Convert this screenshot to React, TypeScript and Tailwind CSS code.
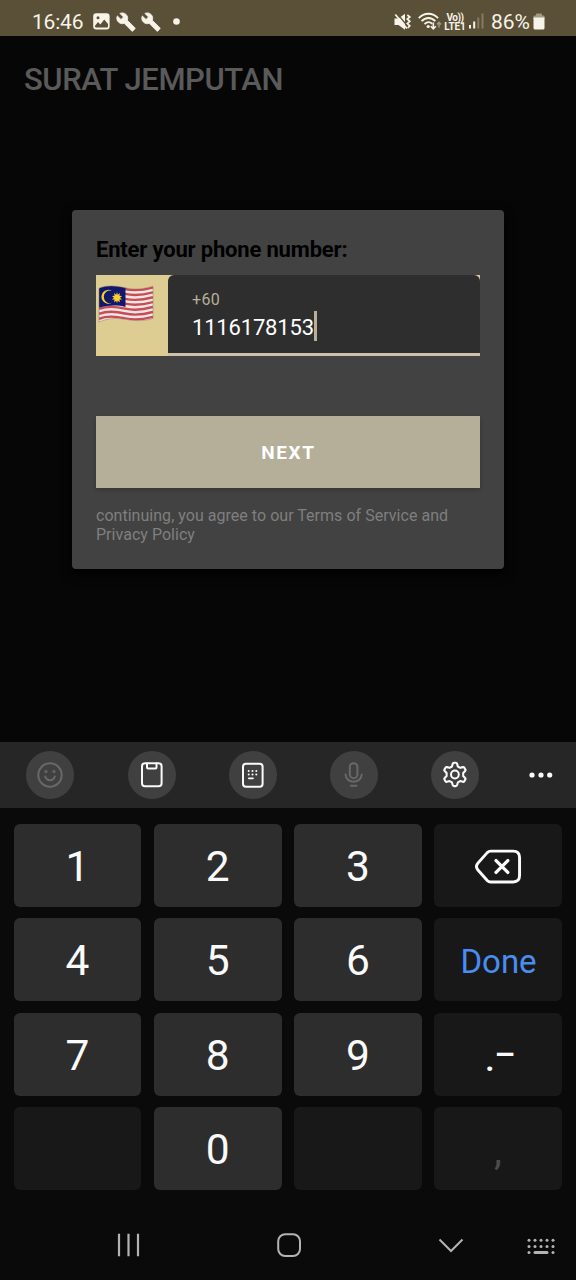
import type { ReactNode } from "react";

function Wrench() {
  return (
    <svg width="20" height="20" viewBox="0 0 24 24" fill="#f7f3e8" stroke="#f7f3e8" strokeWidth="1">
      <path d="M22.7 19l-9.1-9.1c.9-2.3.4-5-1.5-6.9-2-2-5-2.4-7.4-1.3L9 6 6 9 1.6 4.7C.4 7.1.9 10.1 2.9 12.1c1.9 1.9 4.6 2.4 6.9 1.5l9.1 9.1c.4.4 1 .4 1.4 0l2.3-2.3c.5-.4.5-1.1.1-1.4z" />
    </svg>
  );
}

function StatusBar() {
  return (
    <header className="flex h-9 items-center bg-[#5a5038] pt-[7px] pl-8 text-[#f7f3e8]">
      <span className="w-[60px] pt-px text-[21px] leading-none tracking-[-0.200px]">16:46</span>
      <svg width="17" height="17" viewBox="0 0 17 17" className="mr-[6px] ml-[1px]">
        <rect x="0.2" y="0.2" width="16.4" height="16.4" rx="3" fill="#f7f3e8" />
        <circle cx="5" cy="4.8" r="1.5" fill="#5a5038" />
        <path d="M2 12.8L5 9l2.4 2.6L11.2 6.4 15 11v2.2q0 1.2-1.2 1.2H3.2Q2 14.400 2 13.200z" fill="#5a5038" />
      </svg>
      <Wrench />
      <span className="w-[5px]" />
      <Wrench />
      <svg width="7" height="7" viewBox="0 0 7 7" className="ml-[12px]">
        <circle cx="3.500" cy="3.500" r="3.300" fill="#f7f3e8" />
      </svg>
      <svg width="18" height="18" viewBox="0 0 18 18" className="ml-[214px]">
        <path d="M.5 5.500h4L11 .8v16L4.500 12h-4z" fill="#f7f3e8" />
        <path d="M3 .5L13.500 13" stroke="#5a5038" strokeWidth="1.200" />
        <path d="M1.300 1.500L13 15.500" stroke="#f7f3e8" strokeWidth="1.700" />
        <path d="M13.300 2l2.500 2-2.500 2 2.500 2.300-2.500 2.300 2.500 2.200-2 2.200" stroke="#f7f3e8" strokeWidth="1.700" fill="none" />
      </svg>
      <svg width="24" height="19" viewBox="0 0 24 19" className="ml-[6px]" fill="none" stroke="#f7f3e8" strokeWidth="1.900">
        <path d="M.8 6.200C6 .3 14.800.3 20 6.200M3.600 9.200c4-4.300 9.700-4.300 13.700 0M6.500 12.100c2.500-2.500 5.200-2.500 7.700-.4" />
        <circle cx="10.200" cy="14.500" r="1.600" fill="#f7f3e8" stroke="none" />
        <path d="M15.300 10.500v6M12.800 14.300l2.500 2.600 2.500-2.600" strokeWidth="1.600" />
        <path d="M21 15.500v-5M19 12.500l2-2.200 2 2.200" stroke="#a39a80" strokeWidth="1.400" />
      </svg>
      <span className="ml-[1px] flex w-[23px] flex-col items-center pl-px text-[10px] leading-[9px] font-bold">
        <span className="tracking-[-0.500px]">Vo))</span>
        <span className="tracking-[-0.100px]">LTE1</span>
      </span>
      <svg width="15" height="17" viewBox="0 0 15 17" className="ml-[3px]">
        <rect x="0" y="12" width="2" height="3.500" fill="#f7f3e8" />
        <rect x="4.200" y="8.500" width="2" height="7" fill="#f7f3e8" />
        <rect x="8.300" y="4.500" width="2" height="11" fill="#857b61" />
        <rect x="12.500" y="0.500" width="2" height="15" fill="#857b61" />
      </svg>
      <span className="ml-[7px] w-[41px] pt-px text-[21px] leading-none">86%</span>
      <svg width="12" height="17" viewBox="0 0 12 17" className="ml-[1px]">
        <path d="M3 2.500V1.500Q3 .5 4 .5h4q1 0 1 1v1h1.500q1 0 1 1V6H.5V3.500q0-1 1-1z" fill="#a39a80" />
        <path d="M.5 4.500h11V15q0 1.500-1.500 1.500H2Q.5 16.500.5 15z" fill="#f7f3e8" />
      </svg>
    </header>
  );
}

function MalaysiaFlag() {
  const wave = "M2 5.200C10 2 18 2.500 28 4.800S46 6 56 3.200V35.500C46 38.500 38 38 28 36.300S10 35.500 2 39z";
  const stripes = [0, 1, 2, 3, 4, 5, 6];
  return (
    <svg width="58" height="41" viewBox="0 0 58 41">
      <defs>
        <clipPath id="flag">
          <path d={wave} />
        </clipPath>
      </defs>
      <g clipPath="url(#flag)">
        <rect width="58" height="41" fill="#f0e6e4" />
        {stripes.map((i) => (
          <path
            key={i}
            d="M2 6.200C10 3 18 3.500 28 5.800S46 7 56 4.200"
            transform={`translate(0 ${i * 4.9 + 0.2})`}
            stroke="#c94b55"
            strokeWidth="2.400"
            fill="none"
          />
        ))}
        <path d="M0 0H28.500V24C20 21.800 10 22 0 25.500z" fill="#10186d" />
        <path d="M15 7.800A7 7 0 1 0 15 19.800 6.300 6.300 0 1 1 15 7.800z" fill="#f4cf25" />
        <path
          d="M20 9l.8 2.700 2.200-1.600-.6 2.700 2.700.2-2.100 1.700 2.100 1.800-2.700.1.600 2.700-2.200-1.500-.8 2.500-.8-2.500-2.200 1.500.6-2.700-2.700-.1 2.100-1.800-2.100-1.700 2.700-.2-.6-2.700 2.200 1.600z"
          fill="#f8d12e"
        />
      </g>
      <path d={wave} fill="none" stroke="#8a7462" strokeOpacity=".6" strokeWidth=".8" />
    </svg>
  );
}

function PhoneDialog() {
  return (
    <section className="mx-[72px] mt-[87.500px] h-[359.500px] rounded-[4px] bg-[#424242] px-6 pt-[28.500px] shadow-[0_4px_12px_#000]">
      <h2 className="text-[22px] leading-[24px] font-bold tracking-[-0.180px] text-black">Enter your phone number:</h2>
      <div className="mt-[13px] flex h-[81px] bg-[#decd93]">
        <div className="w-[72px] pt-[8px] pl-[1px]">
          <MalaysiaFlag />
        </div>
        <div className="flex-1 rounded-t-[6px] border-b-[3px] border-[#cfc0ab] bg-[#2e2e2e] pt-[16px] pl-6">
          <div className="text-[16px] leading-[18px] tracking-[0.300px] text-[#b7b099]">+60</div>
          <div className="mt-[2px] flex h-[30px] items-center text-[22px] text-white">
            <span className="w-[121.500px] pt-[3px] leading-none tracking-[-0.180px]">1116178153</span>
            <span className="h-[30px] w-[3px] bg-[#b7b099]" />
          </div>
        </div>
      </div>
      <button className="mt-[60px] block h-[72px] w-full bg-[#b5ae98] pt-[2px] pl-px text-[19px] font-bold tracking-[1.600px] text-white shadow-[0_2px_4px_#0003]">
        NEXT
      </button>
      <p className="mt-[18px] text-[16px] leading-[19px] tracking-[0.030px] text-[#7f7f7f]">
        continuing, you agree to our Terms of Service and Privacy Policy
      </p>
    </section>
  );
}

function Tool({ dim, children }: { dim?: boolean; children: ReactNode }) {
  return (
    <button className={`flex size-12 items-center justify-center rounded-full bg-[#404040] ${dim ? "text-[#686868]" : "text-[#fafafa]"}`}>
      <svg width="28" height="28" viewBox="0 0 28 28" fill="none" stroke="currentColor" strokeWidth="2" strokeLinecap="round" strokeLinejoin="round">
        {children}
      </svg>
    </button>
  );
}

function Toolbar() {
  return (
    <div className="flex h-[66px] items-center gap-[53.300px] bg-[#262626] pl-[26.300px]">
      <Tool dim>
        <circle cx="14" cy="14" r="11.700" />
        <path d="M9.200 15.500c1.500 5 8.100 5 9.600 0" />
        <circle cx="10" cy="10.500" r=".6" fill="currentColor" />
        <circle cx="18" cy="10.500" r=".6" fill="currentColor" />
      </Tool>
      <Tool>
        <rect x="4" y="2.300" width="19.600" height="23" rx="3" />
        <path d="M9 2.500v4q0 1 1 1h7.500q1 0 1-1v-4" />
      </Tool>
      <Tool>
        <rect x="4" y="2.800" width="19.600" height="23" rx="3" />
        <path d="M9.700 10h.01M13.500 10h.01M17.300 10h.01M9.700 13.500h.01M13.500 13.500h.01M17.300 13.500h.01" />
        <path d="M9.800 17.300h4.200" strokeWidth="1.700" />
      </Tool>
      <Tool dim>
        <rect x="9.800" y="2.200" width="7.600" height="15" rx="3.800" />
        <path d="M5.500 13.500c.5 9.500 15.700 9.500 16.200 0M11 24.700h5.500" />
      </Tool>
      <Tool>
        <path transform="translate(-.8 -.5) scale(1.050)" d="M11.200 5.700l.7-2.500q.3-1 1.200-1h1.800q.9 0 1.200 1l.7 2.500 2.300 1.300 2.500-.7q.9-.2 1.400.6l.9 1.600q.5.800-.2 1.500l-1.800 1.900v2.800l1.800 1.900q.7.700.2 1.500l-.9 1.600q-.5.800-1.400.6l-2.500-.7-2.300 1.300-.7 2.500q-.3 1-1.200 1h-1.800q-.9 0-1.200-1l-.7-2.500L8.900 19.600l-2.500.7q-.9.200-1.400-.6l-.9-1.600q-.5-.8.200-1.500l1.800-1.900v-2.800L4.300 10q-.7-.7-.2-1.500L5 6.900q.5-.8 1.400-.6l2.500.7z" />
        <circle cx="13.900" cy="13.500" r="3.900" />
      </Tool>
      <svg width="24" height="6" viewBox="0 0 24 6" fill="#fafafa" className="-ml-[4px]">
        <circle cx="3" cy="3" r="2.600" />
        <circle cx="12" cy="3" r="2.600" />
        <circle cx="20.700" cy="3" r="2.600" />
      </svg>
    </div>
  );
}

function Key({ dark, children }: { dark?: boolean; children?: ReactNode }) {
  return (
    <button className={`flex items-center justify-center rounded-[6px] pt-[3.500px] text-[42.500px] leading-none text-[#fafafa] ${dark ? "bg-[#181818]" : "bg-[#2d2d2d]"}`}>
      {children}
    </button>
  );
}

function Keypad() {
  return (
    <div className="mr-[14px] ml-[13.500px] mt-4 grid h-[366.300px] grid-cols-4 grid-rows-4 gap-x-[12.200px] gap-y-[11.500px]">
      <Key>1</Key>
      <Key>2</Key>
      <Key>3</Key>
      <Key dark>
        <svg width="47" height="36" viewBox="0 0 48 36" fill="none" stroke="#fafafa" strokeWidth="3" strokeLinejoin="round" strokeLinecap="round" className="ml-[1px]">
          <path d="M16 1.800h23q6.500 0 6.500 6.500v18.500q0 6.500-6.500 6.500H16q-2 0-3.500-1.500L3 21q-3-3.500 0-7L12.500 3.300Q14 1.800 16 1.800z" />
          <path d="M21.500 11.500l12 12M33.500 11.500l-12 12" strokeWidth="3.400" />
        </svg>
      </Key>
      <Key>4</Key>
      <Key>5</Key>
      <Key>6</Key>
      <Key dark>
        <span className="pl-px text-[33px] text-[#4a8df0]">Done</span>
      </Key>
      <Key>7</Key>
      <Key>8</Key>
      <Key>9</Key>
      <Key dark>
        <span className="flex items-center">
          <span className="-mr-[1px] text-[43px]">.</span>
          <span className="mb-[1px] -ml-[3px] w-[20px] scale-x-[0.780] text-[43px]">–</span>
        </span>
      </Key>
      <Key dark />
      <Key>0</Key>
      <Key dark />
      <Key dark>
        <span className="text-[40px] text-[#4b4b4b]">,</span>
      </Key>
    </div>
  );
}

function NavBar() {
  return (
    <nav className="flex h-[70px] items-center pl-[117px]">
      <svg width="24" height="24" viewBox="0 0 24 24" stroke="#b3b3b3" strokeWidth="2.200">
        <path d="M2 .8v22.500M11.500.8v22.500M21 .8v22.500" />
      </svg>
      <svg width="24" height="24" viewBox="0 0 24 24" fill="none" stroke="#b3b3b3" strokeWidth="2" className="ml-[136px]">
        <rect x="1.200" y="1.200" width="21.800" height="21.800" rx="7" />
      </svg>
      <svg width="26" height="15" viewBox="0 0 26 15" fill="none" stroke="#b3b3b3" strokeWidth="2" className="ml-[137px]">
        <path d="M1.500 1.500L13 13 24.500 1.500" />
      </svg>
      <svg width="28" height="18" viewBox="0 0 28 18" fill="#b3b3b3" className="mt-[4px] ml-[63px]">
        {[2, 8, 14, 20, 26].map((x) => (
          <g key={x}>
            <circle cx={x} cy="2.300" r="1.500" />
            <circle cx={x} cy="8.400" r="1.500" />
          </g>
        ))}
        <circle cx="2" cy="14.500" r="1.500" />
        <circle cx="26" cy="14.500" r="1.500" />
        <rect x="6.500" y="13" width="15" height="3" rx="1.500" />
      </svg>
    </nav>
  );
}

export default function App() {
  return (
    <div className="flex h-[1280px] w-[576px] flex-col overflow-hidden bg-[#0a0a0a] font-[Roboto,sans-serif]">
      <StatusBar />
      <main className="h-[706px] bg-[#060606]">
        <h1 className="pt-[26px] pl-6 text-[31px] leading-[36px] font-medium tracking-[-0.430px] text-[#5a5a5a]">SURAT JEMPUTAN</h1>
        <div className="h-[24px]" />
        <PhoneDialog />
      </main>
      <Toolbar />
      <Keypad />
      <div className="flex-1" />
      <NavBar />
    </div>
  );
}
